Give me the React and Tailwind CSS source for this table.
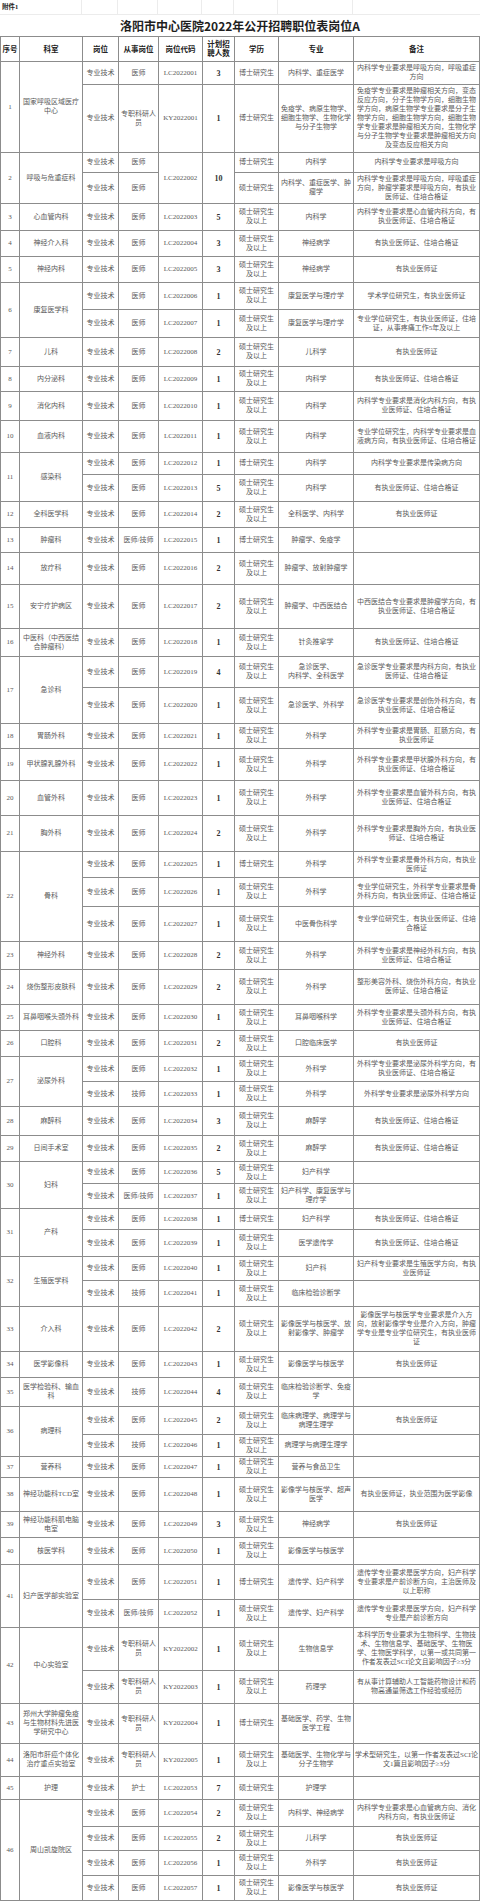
import React from "react";

const T = "专业技术";
const D = "医师";
const R = "专职科研人员";
const MS = "硕士研究生\n及以上";
const PHD = "博士研究生";
const CERT = "有执业医师证";
const CERT2 = "有执业医师证、住培合格证";

// [序号, 科室, [[岗位, 从事岗位, 岗位代码, 人数, 学历, 专业, 备注], ...]]
const groups = [
  ["1", "国家呼吸区域医疗中心", [
    [T, D, "LC2022001", "3", PHD, "内科学、重症医学", "内科学专业要求是呼吸方向，呼吸重症方向"],
    [T, R, "KY2022001", "1", PHD, "免疫学、病原生物学、细胞生物学、生物化学与分子生物学", "免疫学专业要求是肿瘤相关方向，变态反应方向，分子生物学方向，细胞生物学方向，病原生物学专业要求是分子生物学方向，细胞生物学方向，细胞生物学专业要求是肿瘤相关方向，生物化学与分子生物学专业要求是肿瘤相关方向及变态反应相关方向"],
  ]],
  ["2", "呼吸与危重症科", [
    [T, D, { t: "LC2022002", rs: 2 }, { t: "10", rs: 2 }, PHD, "内科学", "内科学专业要求是呼吸方向"],
    [T, D, null, null, "硕士研究生", "内科学、重症医学、肿瘤学", "内科学专业要求是呼吸方向，呼吸重症方向，肿瘤学要求是呼吸方向，有执业医师证、住培合格证"],
  ]],
  ["3", "心血管内科", [[T, D, "LC2022003", "5", MS, "内科学", "内科学专业要求是心血管内科方向，有执业医师证、住培合格证"]]],
  ["4", "神经介入科", [[T, D, "LC2022004", "3", MS, "神经病学", CERT2]]],
  ["5", "神经内科", [[T, D, "LC2022005", "3", MS, "神经病学", CERT]]],
  ["6", "康复医学科", [
    [T, D, "LC2022006", "1", MS, "康复医学与理疗学", "学术学位研究生，有执业医师证"],
    [T, D, "LC2022007", "1", MS, "康复医学与理疗学", "专业学位研究生，有执业医师证，住培证，从事疼痛工作5年及以上"],
  ]],
  ["7", "儿科", [[T, D, "LC2022008", "2", MS, "儿科学", CERT]]],
  ["8", "内分泌科", [[T, D, "LC2022009", "1", MS, "内科学", CERT2]]],
  ["9", "消化内科", [[T, D, "LC2022010", "1", MS, "内科学", "内科学专业要求是消化内科方向，有执业医师证、住培合格证"]]],
  ["10", "血液内科", [[T, D, "LC2022011", "1", MS, "内科学", "专业学位研究生，内科学专业要求是血液病方向，有执业医师证、住培合格证"]]],
  ["11", "感染科", [
    [T, D, "LC2022012", "1", PHD, "内科学", "内科学专业要求是传染病方向"],
    [T, D, "LC2022013", "5", MS, "内科学", CERT2],
  ]],
  ["12", "全科医学科", [[T, D, "LC2022014", "2", MS, "全科医学、内科学", CERT]]],
  ["13", "肿瘤科", [[T, "医师/技师", "LC2022015", "1", PHD, "肿瘤学、免疫学", ""]]],
  ["14", "放疗科", [[T, D, "LC2022016", "2", MS, "肿瘤学、放射肿瘤学", ""]]],
  ["15", "安宁疗护病区", [[T, D, "LC2022017", "2", MS, "肿瘤学、中西医结合", "中西医结合专业要求是肿瘤学方向，有执业医师证、住培合格证"]]],
  ["16", "中医科（中西医结合肿瘤科）", [[T, D, "LC2022018", "1", MS, "针灸推拿学", CERT2]]],
  ["17", "急诊科", [
    [T, D, "LC2022019", "4", MS, "急诊医学、\n内科学、全科医学", "急诊医学专业要求是内科方向，有执业医师证、住培合格证"],
    [T, D, "LC2022020", "1", MS, "急诊医学、外科学", "急诊医学专业要求是创伤外科方向，有执业医师证、住培合格证"],
  ]],
  ["18", "胃肠外科", [[T, D, "LC2022021", "1", MS, "外科学", "外科学专业要求是胃肠、肛肠方向，有执业医师证"]]],
  ["19", "甲状腺乳腺外科", [[T, D, "LC2022022", "1", MS, "外科学", "外科学专业要求是甲状腺外科方向，有执业医师证、住培合格证"]]],
  ["20", "血管外科", [[T, D, "LC2022023", "1", MS, "外科学", "外科学专业要求是血管外科方向，有执业医师证、住培合格证"]]],
  ["21", "胸外科", [[T, D, "LC2022024", "2", MS, "外科学", "外科学专业要求是胸外方向，有执业医师证、住培合格证"]]],
  ["22", "骨科", [
    [T, D, "LC2022025", "1", PHD, "外科学", "外科学专业要求是骨外科方向，有执业医师证"],
    [T, D, "LC2022026", "1", MS, "外科学", "专业学位研究生，外科学专业要求是骨外科方向，有执业医师证、住培合格证"],
    [T, D, "LC2022027", "1", MS, "中医骨伤科学", "专业学位研究生，有执业医师证、住培合格证"],
  ]],
  ["23", "神经外科", [[T, D, "LC2022028", "2", MS, "外科学", "外科学专业要求是神经外科方向，有执业医师证、住培合格证"]]],
  ["24", "烧伤整形皮肤科", [[T, D, "LC2022029", "2", MS, "外科学", "整形美容外科、烧伤外科方向，有执业医师证、住培合格证"]]],
  ["25", "耳鼻咽喉头颈外科", [[T, D, "LC2022030", "1", MS, "耳鼻咽喉科学", "外科学专业要求是头颈外科方向，有执业医师证、住培合格证"]]],
  ["26", "口腔科", [[T, D, "LC2022031", "2", MS, "口腔临床医学", CERT]]],
  ["27", "泌尿外科", [
    [T, D, "LC2022032", "1", MS, "外科学", "外科学专业要求是泌尿外科学方向，有执业医师证、住培合格证"],
    [T, "技师", "LC2022033", "1", MS, "外科学", "外科学专业要求是泌尿外科学方向"],
  ]],
  ["28", "麻醉科", [[T, D, "LC2022034", "3", MS, "麻醉学", CERT2]]],
  ["29", "日间手术室", [[T, D, "LC2022035", "2", MS, "麻醉学", CERT2]]],
  ["30", "妇科", [
    [T, D, "LC2022036", "5", MS, "妇产科学", ""],
    [T, "医师/技师", "LC2022037", "1", MS, "妇产科学、康复医学与理疗学", ""],
  ]],
  ["31", "产科", [
    [T, D, "LC2022038", "1", PHD, "妇产科学", CERT2],
    [T, D, "LC2022039", "1", MS, "医学遗传学", CERT2],
  ]],
  ["32", "生殖医学科", [
    [T, D, "LC2022040", "1", MS, "妇产科", "妇产科专业要求是生殖医学方向，有执业医师证"],
    [T, "技师", "LC2022041", "1", MS, "临床检验诊断学", ""],
  ]],
  ["33", "介入科", [[T, D, "LC2022042", "2", MS, "影像医学与核医学、放射影像学、肿瘤学", "影像医学与核医学专业要求是介入方向，放射影像学专业是介入方向，肿瘤学专业是专业学位研究生，有执业医师证"]]],
  ["34", "医学影像科", [[T, D, "LC2022043", "1", MS, "影像医学与核医学", CERT]]],
  ["35", "医学检验科、输血科", [[T, "技师", "LC2022044", "4", MS, "临床检验诊断学、免疫学", ""]]],
  ["36", "病理科", [
    [T, D, "LC2022045", "2", MS, "临床病理学、病理学与病理生理学", CERT],
    [T, "技师", "LC2022046", "1", MS, "病理学与病理生理学", ""],
  ]],
  ["37", "营养科", [[T, D, "LC2022047", "1", MS, "营养与食品卫生", ""]]],
  ["38", "神经功能科TCD室", [[T, D, "LC2022048", "1", MS, "影像学与核医学、超声医学", "有执业医师证，执业范围为医学影像"]]],
  ["39", "神经功能科肌电脑电室", [[T, D, "LC2022049", "3", MS, "神经病学", CERT]]],
  ["40", "核医学科", [[T, D, "LC2022050", "1", MS, "影像医学与核医学", ""]]],
  ["41", "妇产医学部实验室", [
    [T, D, "LC2022051", "1", PHD, "遗传学、妇产科学", "遗传学专业要求是医学方向，妇产科学专业要求是产前诊断方向，主治医师及以上职称"],
    [T, "医师/技师", "LC2022052", "1", MS, "遗传学、妇产科学", "遗传学专业要求是医学方向，妇产科学专业是产前诊断方向"],
  ]],
  ["42", "中心实验室", [
    [T, R, "KY2022002", "1", MS, "生物信息学", "本科学历专业要求为生物科学、生物技术、生物信息学、基础医学、生物医学、生物医学科学，以第一或共同第一作者发表过SCI论文且影响因子≥3分"],
    [T, R, "KY2022003", "1", MS, "药理学", "有从事计算辅助人工智能药物设计和药物高通量筛选工作经验或经历"],
  ]],
  ["43", "郑州大学肿瘤免疫与生物材料先进医学研究中心", [[T, R, "KY2022004", "1", PHD, "基础医学、药学、生物医学工程", ""]]],
  ["44", "洛阳市肝癌个体化治疗重点实验室", [[T, R, "KY2022005", "1", MS, "基础医学、生物化学与分子生物学", "学术型研究生，以第一作者发表过SCI论文1篇且影响因子≥3分"]]],
  ["45", "护理", [[T, "护士", "LC2022053", "7", "硕士研究生", "护理学", ""]]],
  ["46", "周山凯旋院区", [
    [T, D, "LC2022054", "2", MS, "内科学、神经病学", "内科学专业要求是心血管病方向、消化内科方向，有执业医师证"],
    [T, D, "LC2022055", "2", MS, "儿科学", CERT],
    [T, D, "LC2022056", "1", MS, "外科学", CERT],
    [T, D, "LC2022057", "1", MS, "影像医学与核医学", CERT],
  ]],
];

const heads = ["序号", "科室", "岗位", "从事岗位", "岗位代码", "计划招聘人数", "学历", "专业", "备注"];

const spans = { 1: "", 2: "row-span-2", 3: "row-span-3", 4: "row-span-4" };

function Cell({ children, span = 1, className = "" }) {
  return (
    <div
      className={`bg-white flex items-center justify-center text-center px-px overflow-hidden whitespace-pre-line ${spans[span]} ${className}`}
    >
      {children}
    </div>
  );
}

function App() {
  const cells = [];
  heads.forEach((h) => {
    cells.push(
      <Cell key={"h" + h} className="font-bold text-[7.5px] leading-[9px] text-[#222]">
        {h}
      </Cell>
    );
  });

  groups.forEach(([no, dept, rows]) => {
    rows.forEach((row, i) => {
      if (i === 0) {
        cells.push(<Cell key={no + "n"} span={rows.length}>{no}</Cell>);
        cells.push(<Cell key={no + "d"} span={rows.length}>{dept}</Cell>);
      }
      row.forEach((c, j) => {
        if (c === null) return;
        const text = typeof c === "object" ? c.t : c;
        const rs = typeof c === "object" ? c.rs : 1;
        cells.push(
          <Cell
            key={no + "-" + i + "-" + j}
            span={rs}
            className={j === 3 ? "text-[8px] font-semibold text-[#333]" : ""}
          >
            {text}
          </Cell>
        );
      });
    });
  });

  return (
    <div className="w-[480px] bg-white font-['Liberation_Serif','Noto_Sans_CJK_SC',serif] text-[#5a5a5a]">
      <div className="h-[36px] flex flex-col">
        <div className="h-[15px] grid grid-cols-[82px_36px_40px_44px_32px_44px_75px_127px] border-b border-[#ececec]">
          <div className="flex items-center pl-[2px] text-[6.5px] font-bold text-[#222] border-r border-[#ececec]">
            附件1
          </div>
          <div className="border-r border-[#ececec]"></div>
          <div className="border-r border-[#ececec]"></div>
          <div className="border-r border-[#ececec]"></div>
          <div className="border-r border-[#ececec]"></div>
          <div className="border-r border-[#ececec]"></div>
          <div className="border-r border-[#ececec]"></div>
          <div></div>
        </div>
        <div className="flex-1 flex items-center justify-center text-[12px] font-bold text-[#1e1e1e] font-['Noto_Sans_CJK_SC',sans-serif]">
          洛阳市中心医院2022年公开招聘职位表岗位A
        </div>
      </div>

      <div className="grid gap-px p-px bg-[#8c8c8c] text-[7px] leading-[9px] grid-cols-[18px_62px_35px_39px_43px_31px_43px_74px_125px] grid-rows-[24px_22px_67px_19px_30px_26px_25px_25px_26px_27px_28px_24px_28px_31px_21px_26px_25px_24px_31px_43px_27px_30px_35px_24px_31px_34px_35px_25px_28px_34px_27px_34px_25px_25px_24px_24px_28px_25px_21px_24px_20px_26px_23px_25px_44px_25px_28px_27px_21px_20px_33px_25px_26px_34px_27px_42px_32px_39px_32px_22px_26px_23px_24px_24px]">
        {cells}
      </div>
    </div>
  );
}

export default App;
